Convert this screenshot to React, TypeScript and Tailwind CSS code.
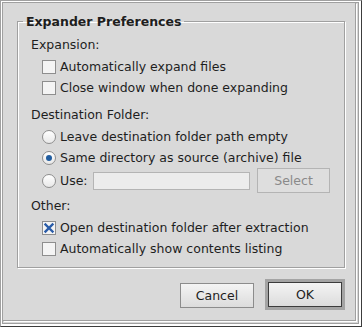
import React from "react";

function CheckBox({ checked }: { checked?: boolean }) {
  return (
    <span className="w-[14px] h-[14px] shrink-0 border border-[#8e8e8e] bg-[#f4f4f4] flex items-center justify-center">
      {checked && (
        <svg width="12" height="12" viewBox="0 0 12 12">
          <path d="M2.5 2.5 L9.5 9.5 M9.5 2.5 L2.5 9.5" stroke="#2a5ca8" strokeWidth="2.4" strokeLinecap="square" />
        </svg>
      )}
    </span>
  );
}

function Radio({ checked }: { checked?: boolean }) {
  return (
    <span className="w-[14px] h-[14px] shrink-0 rounded-full border border-[#8e8e8e] bg-gradient-to-b from-[#ffffff] to-[#e8e8e8] flex items-center justify-center">
      {checked && <span className="w-[6px] h-[6px] rounded-full bg-[#215da0]" />}
    </span>
  );
}

function CheckRow({ checked, label }: { checked?: boolean; label: string }) {
  return (
    <div className="flex items-center h-[21px] ml-[11px]">
      <CheckBox checked={checked} />
      <span className="ml-[4px]">{label}</span>
    </div>
  );
}

function RadioRow({ checked, label }: { checked?: boolean; label: string }) {
  return (
    <div className="flex items-center h-[21px] ml-[11px]">
      <Radio checked={checked} />
      <span className="ml-[4px]">{label}</span>
    </div>
  );
}

export default function App() {
  return (
    <div className="w-[362px] h-[327px] bg-[#d9d9d9] text-[12.5px] leading-[16px] text-[#1e1e1e] font-['DejaVu_Sans',sans-serif] border border-t-[#a0a0a0] border-l-[#a0a0a0] border-r-[#3c3c3c] border-b-[#3c3c3c]">
      <div className="h-full border-l border-t border-r-2 border-b-2 border-white">
        <div className="h-full border border-[#a0a0a0] pr-[2px] pb-[2px]">
          <div className="h-full border-r border-b border-[#a0a0a0] shadow-[1px_1px_0_#ffffff]">
            <div className="ml-[14px] pt-[10px] w-[328px] flex flex-col">
              <fieldset className="h-[255px] border border-[#a0a0a0] shadow-[1px_1px_0_#ffffff,inset_1px_1px_0_#ffffff] p-0 m-0 min-w-0">
                <legend className="ml-[5px] px-[3px] font-bold leading-[17px]">Expander Preferences</legend>
                <div className="pl-[13px] pt-[7px] flex flex-col">
                  <div className="h-[16px]">Expansion:</div>
                  <div className="mt-[3px]">
                    <CheckRow label="Automatically expand files" />
                    <CheckRow label="Close window when done expanding" />
                  </div>
                  <div className="h-[16px] mt-[9px]">Destination Folder:</div>
                  <div className="mt-[3px]">
                    <RadioRow label="Leave destination folder path empty" />
                    <RadioRow checked label="Same directory as source (archive) file" />
                    <div className="flex items-center h-[25px] ml-[11px]">
                      <Radio />
                      <span className="ml-[4px] w-[33px]">Use:</span>
                      <div className="w-[157px] h-[18px] border border-[#b4b4b4] bg-[#ececec]" />
                      <div className="ml-[7px] w-[73px] h-[25px] border border-[#b4b4b4] bg-[#dedede] text-[#8a8a8a] flex items-center justify-center">
                        Select
                      </div>
                    </div>
                  </div>
                  <div className="h-[16px] mt-[5px]">Other:</div>
                  <div className="mt-[3px]">
                    <CheckRow checked label="Open destination folder after extraction" />
                    <CheckRow label="Automatically show contents listing" />
                  </div>
                </div>
              </fieldset>
              <div className="flex justify-end items-start mt-[11px]">
                <div className="mt-[4px] mr-[11px] w-[74px] h-[25px] border border-[#8c8c8c] bg-gradient-to-b from-[#f4f4f4] to-[#dcdcdc] flex items-center justify-center">
                  Cancel
                </div>
                <div className="w-[80px] h-[31px] border-[3px] border-[#a4a4a4]">
                  <div className="w-full h-full border border-[#3c3c3c] bg-gradient-to-b from-[#f4f4f4] to-[#dcdcdc] flex items-center justify-center">
                    OK
                  </div>
                </div>
              </div>
            </div>
          </div>
        </div>
      </div>
    </div>
  );
}
